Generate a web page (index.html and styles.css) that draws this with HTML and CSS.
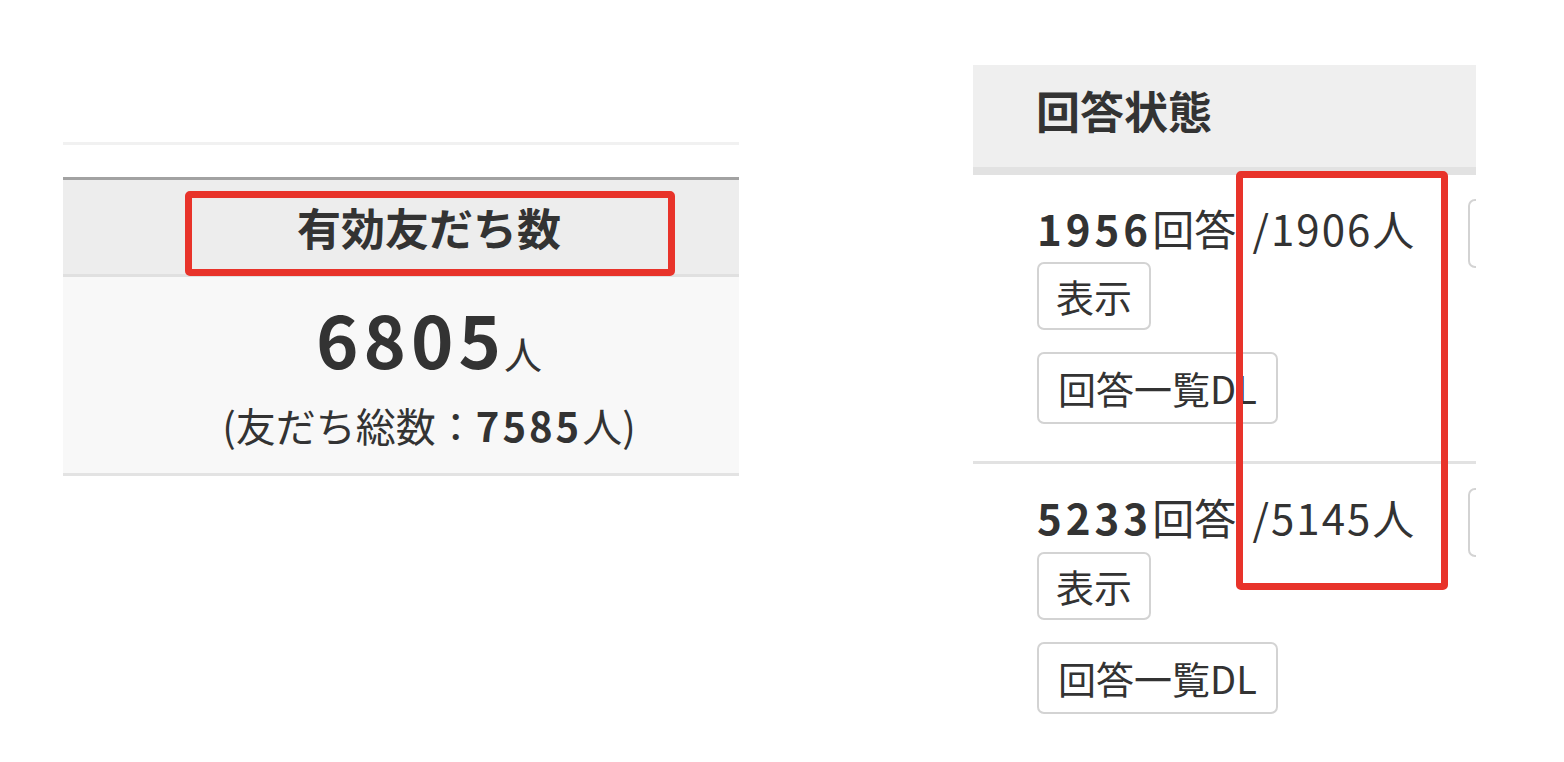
FILE: index.html
```html
<!DOCTYPE html>
<html lang="ja">
<head>
<meta charset="utf-8">
<title>友だち数・回答状態</title>
<link rel="stylesheet" href="styles.css">
</head>
<body>
<main class="page">
  <section class="friends">
    <div class="friends__rule"></div>
    <div class="stat">
      <div class="stat__head">有効友だち数</div>
      <div class="stat__body">
        <p class="stat__value"><span class="stat__num">6805</span><span class="stat__unit">人</span></p>
        <p class="stat__total">(友だち総数：<span class="stat__total-num">7585</span>人)</p>
      </div>
      <div class="mark mark--head"></div>
    </div>
  </section>

  <section class="answers">
    <div class="answers__head">回答状態</div>
    <div class="answers__row">
      <div class="answers__cell">
        <p class="answers__count"><span class="answers__num">1956</span>回答 <span class="answers__people">/1906人</span></p>
        <div class="answers__actions">
          <button class="btn" type="button">表示</button>
          <button class="btn btn--wide" type="button">回答一覧DL</button>
        </div>
      </div>
      <div class="answers__side">
        <button class="btn btn--side" type="button" aria-label="編集"></button>
      </div>
    </div>
    <div class="answers__row answers__row--last">
      <div class="answers__cell">
        <p class="answers__count"><span class="answers__num">5233</span>回答 <span class="answers__people">/5145人</span></p>
        <div class="answers__actions">
          <button class="btn" type="button">表示</button>
          <button class="btn btn--wide" type="button">回答一覧DL</button>
        </div>
      </div>
      <div class="answers__side">
        <button class="btn btn--side" type="button" aria-label="編集"></button>
      </div>
    </div>
    <div class="mark mark--people"></div>
  </section>
</main>
</body>
</html>
```
FILE: styles.css
```css
* {
  box-sizing: border-box;
}

html, body {
  margin: 0;
  padding: 0;
  background: #ffffff;
}

body {
  font-family: "Noto Sans CJK JP", "Noto Sans", sans-serif;
  color: #333333;
}

p {
  margin: 0;
}

.page {
  display: flex;
  align-items: flex-start;
  padding-left: 63px;
  gap: 234px;
}

/* ---------- left: friends count ---------- */
.friends {
  width: 676px;
  margin-top: 142px;
}

.friends__rule {
  height: 3px;
  background: #f1f1f1;
}

.stat {
  position: relative;
  margin-top: 32px;
}

.stat__head {
  height: 100px;
  display: flex;
  align-items: center;
  justify-content: center;
  padding-left: 56px;
  background: #ededed;
  border-top: 3px solid #a2a2a2;
  border-bottom: 3px solid #e0e0e0;
  font-size: 44px;
  font-weight: 700;
  line-height: 1.2;
}

.stat__body {
  background: #f8f8f8;
  border-bottom: 3px solid #e3e3e3;
  padding: 18px 0 24px 56px;
  text-align: center;
}

.stat__value {
  line-height: 1.2;
}

.stat__num {
  font-size: 72px;
  font-weight: 700;
  letter-spacing: 5px;
}

.stat__unit {
  font-size: 38px;
  margin-left: -2px;
}

.stat__total {
  margin-top: 20px;
  font-size: 40px;
  line-height: 1.2;
}

.stat__total-num {
  font-weight: 700;
  letter-spacing: 3px;
}

/* ---------- right: answers ---------- */
.answers {
  position: relative;
  width: 503px;
  margin-top: 65px;
  overflow: hidden;
}

.answers__head {
  height: 110px;
  display: flex;
  align-items: center;
  padding: 0 0 12px 63px;
  background: #efefef;
  border-bottom: 8px solid #e2e2e2;
  font-size: 44px;
  font-weight: 700;
  line-height: 1.2;
}

.answers__row {
  display: flex;
  align-items: flex-start;
  padding-left: 64px;
  border-bottom: 3px solid #e2e2e2;
}

.answers__row--last {
  border-bottom: none;
}

.answers__cell {
  flex: 0 0 431px;
  padding: 28px 0 37px;
}

.answers__count {
  font-size: 42px;
  line-height: 1.2;
  white-space: nowrap;
}

.answers__num {
  font-weight: 700;
  letter-spacing: 4px;
}

.answers__people {
  margin-left: 7px;
  letter-spacing: 2px;
}

.answers__actions {
  display: flex;
  flex-direction: column;
  align-items: flex-start;
  gap: 22px;
  margin-top: 9px;
}

.answers__side {
  flex: 0 0 auto;
  padding-top: 24px;
}

.btn {
  display: inline-block;
  height: 68px;
  padding: 0 17px;
  border: 2px solid #d3d3d3;
  border-radius: 7px;
  background: #ffffff;
  color: #333333;
  font-family: inherit;
  font-size: 38px;
  line-height: 60px;
  white-space: nowrap;
}

.btn--wide {
  height: 72px;
  padding: 0 19px;
  line-height: 66px;
}

.btn--side {
  width: 116px;
  height: 69px;
}

/* ---------- annotation marks ---------- */
.mark {
  position: absolute;
  border: 7px solid #e8332a;
  border-radius: 5px;
  pointer-events: none;
}

.mark--head {
  left: 122px;
  top: 14px;
  width: 490px;
  height: 85px;
}

.mark--people {
  left: 263px;
  top: 106px;
  width: 212px;
  height: 419px;
}
```
